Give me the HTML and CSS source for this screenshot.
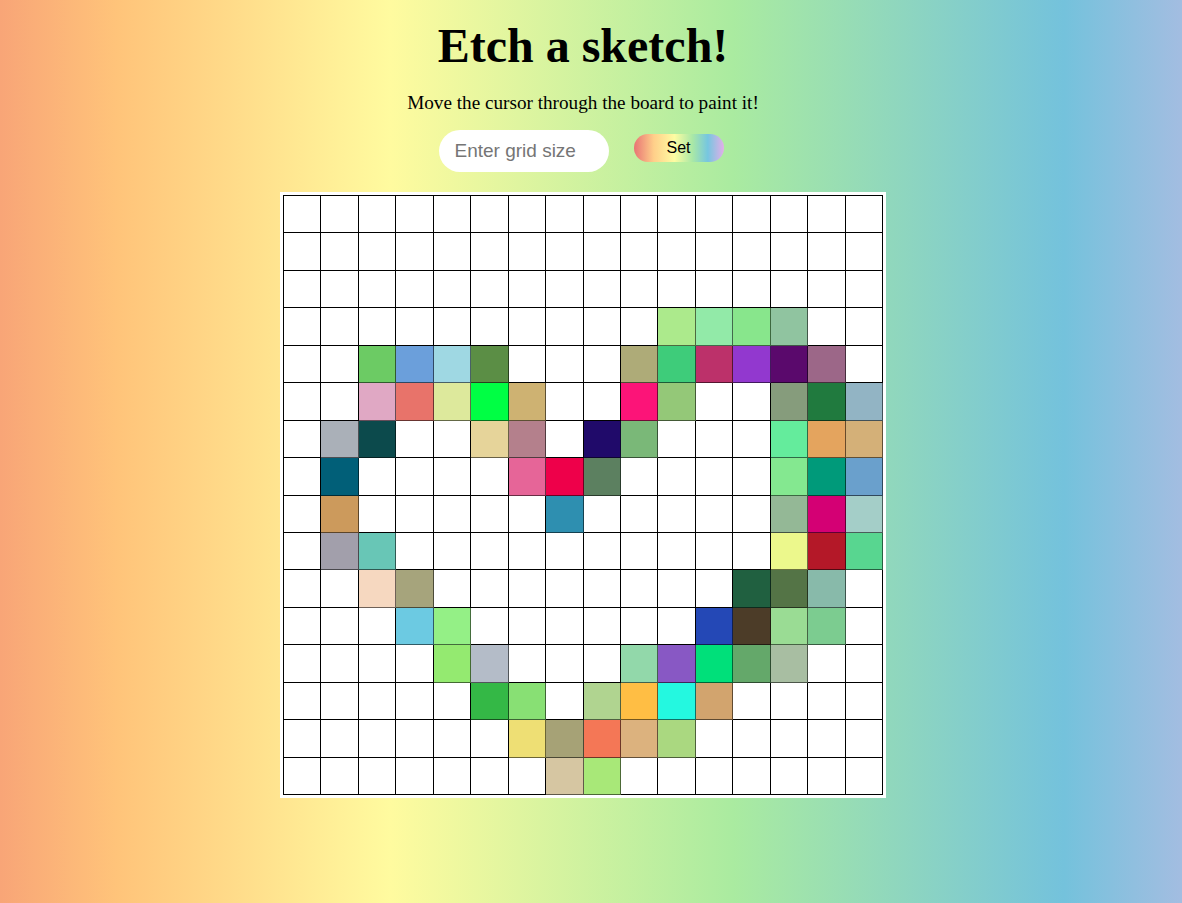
FILE: index.html
```html
<!DOCTYPE html>
<html lang="en">
<head>
<meta charset="utf-8">
<title>Etch a sketch!</title>
<link rel="stylesheet" href="styles.css">
</head>
<body>
<main class="page">
  <h1 class="title">Etch a sketch!</h1>
  <p class="subtitle">Move the cursor through the board to paint it!</p>
  <div class="controls">
    <input class="size-input" type="text" placeholder="Enter grid size">
    <button class="set-btn" type="button">Set</button>
  </div>
  <div class="board">
    <div class="grid">
      <!-- row 1 -->
      <div class="cell"></div><div class="cell"></div><div class="cell"></div><div class="cell"></div><div class="cell"></div><div class="cell"></div><div class="cell"></div><div class="cell"></div><div class="cell"></div><div class="cell"></div><div class="cell"></div><div class="cell"></div><div class="cell"></div><div class="cell"></div><div class="cell"></div><div class="cell"></div>
      <!-- row 2 -->
      <div class="cell"></div><div class="cell"></div><div class="cell"></div><div class="cell"></div><div class="cell"></div><div class="cell"></div><div class="cell"></div><div class="cell"></div><div class="cell"></div><div class="cell"></div><div class="cell"></div><div class="cell"></div><div class="cell"></div><div class="cell"></div><div class="cell"></div><div class="cell"></div>
      <!-- row 3 -->
      <div class="cell"></div><div class="cell"></div><div class="cell"></div><div class="cell"></div><div class="cell"></div><div class="cell"></div><div class="cell"></div><div class="cell"></div><div class="cell"></div><div class="cell"></div><div class="cell"></div><div class="cell"></div><div class="cell"></div><div class="cell"></div><div class="cell"></div><div class="cell"></div>
      <!-- row 4 -->
      <div class="cell"></div><div class="cell"></div><div class="cell"></div><div class="cell"></div><div class="cell"></div><div class="cell"></div><div class="cell"></div><div class="cell"></div><div class="cell"></div><div class="cell"></div><div class="cell p" style="background:#acea8c"></div><div class="cell p" style="background:#92eaa8"></div><div class="cell p" style="background:#88e68c"></div><div class="cell p" style="background:#90c4a0"></div><div class="cell"></div><div class="cell"></div>
      <!-- row 5 -->
      <div class="cell"></div><div class="cell"></div><div class="cell p" style="background:#6ccb64"></div><div class="cell p" style="background:#6b9fdb"></div><div class="cell p" style="background:#9fd8e3"></div><div class="cell p" style="background:#5b8e45"></div><div class="cell"></div><div class="cell"></div><div class="cell"></div><div class="cell p" style="background:#aeab78"></div><div class="cell p" style="background:#3ecc7a"></div><div class="cell p" style="background:#bc316a"></div><div class="cell p" style="background:#9238cf"></div><div class="cell p" style="background:#5a096c"></div><div class="cell p" style="background:#9c6788"></div><div class="cell"></div>
      <!-- row 6 -->
      <div class="cell"></div><div class="cell"></div><div class="cell p" style="background:#e0a8c4"></div><div class="cell p" style="background:#e8736a"></div><div class="cell p" style="background:#dde99c"></div><div class="cell p" style="background:#00ff44"></div><div class="cell p" style="background:#ceb272"></div><div class="cell"></div><div class="cell"></div><div class="cell p" style="background:#fc1478"></div><div class="cell p" style="background:#94c878"></div><div class="cell"></div><div class="cell"></div><div class="cell p" style="background:#869c7c"></div><div class="cell p" style="background:#207a3e"></div><div class="cell p" style="background:#92b4c4"></div>
      <!-- row 7 -->
      <div class="cell"></div><div class="cell p" style="background:#aab0b8"></div><div class="cell p" style="background:#0c4a4c"></div><div class="cell"></div><div class="cell"></div><div class="cell p" style="background:#e6d49a"></div><div class="cell p" style="background:#b4808c"></div><div class="cell"></div><div class="cell p" style="background:#200a6a"></div><div class="cell p" style="background:#7ab878"></div><div class="cell"></div><div class="cell"></div><div class="cell"></div><div class="cell p" style="background:#64ec9c"></div><div class="cell p" style="background:#e4a45e"></div><div class="cell p" style="background:#d4b078"></div>
      <!-- row 8 -->
      <div class="cell"></div><div class="cell p" style="background:#015f78"></div><div class="cell"></div><div class="cell"></div><div class="cell"></div><div class="cell"></div><div class="cell p" style="background:#e66598"></div><div class="cell p" style="background:#ee004a"></div><div class="cell p" style="background:#5c8060"></div><div class="cell"></div><div class="cell"></div><div class="cell"></div><div class="cell"></div><div class="cell p" style="background:#84e890"></div><div class="cell p" style="background:#009a7a"></div><div class="cell p" style="background:#6aa0cc"></div>
      <!-- row 9 -->
      <div class="cell"></div><div class="cell p" style="background:#cc9a5c"></div><div class="cell"></div><div class="cell"></div><div class="cell"></div><div class="cell"></div><div class="cell"></div><div class="cell p" style="background:#2e8fb0"></div><div class="cell"></div><div class="cell"></div><div class="cell"></div><div class="cell"></div><div class="cell"></div><div class="cell p" style="background:#94b896"></div><div class="cell p" style="background:#d40074"></div><div class="cell p" style="background:#a4cec8"></div>
      <!-- row 10 -->
      <div class="cell"></div><div class="cell p" style="background:#a29fab"></div><div class="cell p" style="background:#68c6b6"></div><div class="cell"></div><div class="cell"></div><div class="cell"></div><div class="cell"></div><div class="cell"></div><div class="cell"></div><div class="cell"></div><div class="cell"></div><div class="cell"></div><div class="cell"></div><div class="cell p" style="background:#ecf88c"></div><div class="cell p" style="background:#b41828"></div><div class="cell p" style="background:#58d690"></div>
      <!-- row 11 -->
      <div class="cell"></div><div class="cell"></div><div class="cell p" style="background:#f6d8c0"></div><div class="cell p" style="background:#a6a47c"></div><div class="cell"></div><div class="cell"></div><div class="cell"></div><div class="cell"></div><div class="cell"></div><div class="cell"></div><div class="cell"></div><div class="cell"></div><div class="cell p" style="background:#206040"></div><div class="cell p" style="background:#547446"></div><div class="cell p" style="background:#88baaa"></div><div class="cell"></div>
      <!-- row 12 -->
      <div class="cell"></div><div class="cell"></div><div class="cell"></div><div class="cell p" style="background:#6ccae2"></div><div class="cell p" style="background:#94f086"></div><div class="cell"></div><div class="cell"></div><div class="cell"></div><div class="cell"></div><div class="cell"></div><div class="cell"></div><div class="cell p" style="background:#2448b6"></div><div class="cell p" style="background:#4c3c28"></div><div class="cell p" style="background:#9adc94"></div><div class="cell p" style="background:#7ccc90"></div><div class="cell"></div>
      <!-- row 13 -->
      <div class="cell"></div><div class="cell"></div><div class="cell"></div><div class="cell"></div><div class="cell p" style="background:#94ea70"></div><div class="cell p" style="background:#b4bcc8"></div><div class="cell"></div><div class="cell"></div><div class="cell"></div><div class="cell p" style="background:#92d8aa"></div><div class="cell p" style="background:#8858c4"></div><div class="cell p" style="background:#00e07a"></div><div class="cell p" style="background:#64a86a"></div><div class="cell p" style="background:#a8bea2"></div><div class="cell"></div><div class="cell"></div>
      <!-- row 14 -->
      <div class="cell"></div><div class="cell"></div><div class="cell"></div><div class="cell"></div><div class="cell"></div><div class="cell p" style="background:#34b846"></div><div class="cell p" style="background:#88e074"></div><div class="cell"></div><div class="cell p" style="background:#b0d490"></div><div class="cell p" style="background:#ffbe44"></div><div class="cell p" style="background:#24f8e0"></div><div class="cell p" style="background:#d2a46e"></div><div class="cell"></div><div class="cell"></div><div class="cell"></div><div class="cell"></div>
      <!-- row 15 -->
      <div class="cell"></div><div class="cell"></div><div class="cell"></div><div class="cell"></div><div class="cell"></div><div class="cell"></div><div class="cell p" style="background:#eedf74"></div><div class="cell p" style="background:#a6a276"></div><div class="cell p" style="background:#f47756"></div><div class="cell p" style="background:#dcb27e"></div><div class="cell p" style="background:#aad880"></div><div class="cell"></div><div class="cell"></div><div class="cell"></div><div class="cell"></div><div class="cell"></div>
      <!-- row 16 -->
      <div class="cell"></div><div class="cell"></div><div class="cell"></div><div class="cell"></div><div class="cell"></div><div class="cell"></div><div class="cell"></div><div class="cell p" style="background:#d6c6a2"></div><div class="cell p" style="background:#a8e878"></div><div class="cell"></div><div class="cell"></div><div class="cell"></div><div class="cell"></div><div class="cell"></div><div class="cell"></div><div class="cell"></div>
    </div>
  </div>
</main>
</body>
</html>
```
FILE: styles.css
```css
* {
  box-sizing: border-box;
}

html,
body {
  margin: 0;
}

body {
  min-height: 100vh;
  background: linear-gradient(90deg, #f8a577 0%, #ffc47a 10%, #fffb9f 33%, #aaeba0 62%, #74c2dc 90%, #a3bde1 100%);
  font-family: "Liberation Serif", "Times New Roman", serif;
  color: #000;
}

.page {
  display: flex;
  flex-direction: column;
  align-items: center;
  padding-right: 16px;
  padding-bottom: 40px;
}

.title {
  font-size: 48px;
  font-weight: bold;
  margin: 18px 0 0;
}

.subtitle {
  font-size: 19.2px;
  margin: 19px 0 0;
}

.controls {
  display: flex;
  align-items: flex-start;
  gap: 25px;
  margin-top: 16px;
  margin-right: 4px;
}

.size-input {
  width: 170px;
  height: 42px;
  border: none;
  border-radius: 21px;
  padding: 0 16px;
  font-family: "Liberation Sans", Arial, sans-serif;
  font-size: 19px;
  background: #fff;
  outline: none;
}

.size-input::placeholder {
  color: #757575;
}

.set-btn {
  margin-top: 4px;
  width: 90px;
  height: 28px;
  border: none;
  border-radius: 14px;
  padding: 0;
  font-family: "Liberation Sans", Arial, sans-serif;
  font-size: 16px;
  color: #000;
  background: linear-gradient(90deg, #e87474 0%, #ffcf8a 22%, #fdfca2 45%, #a9e8a6 65%, #76c6e0 82%, #e2afe8 100%);
}

.board {
  margin-top: 20px;
  background: #fff;
  padding: 3px;
}

.grid {
  display: grid;
  grid-template-columns: repeat(16, 1fr);
  grid-template-rows: repeat(16, 1fr);
  width: 600px;
  height: 600px;
  border-top: 1px solid #000;
  border-left: 1px solid #000;
}

.cell {
  background: #fff;
  border-right: 1px solid #000;
  border-bottom: 1px solid #000;
}

.cell.p {
  border-color: rgba(0, 0, 0, 0.55);
}
```
